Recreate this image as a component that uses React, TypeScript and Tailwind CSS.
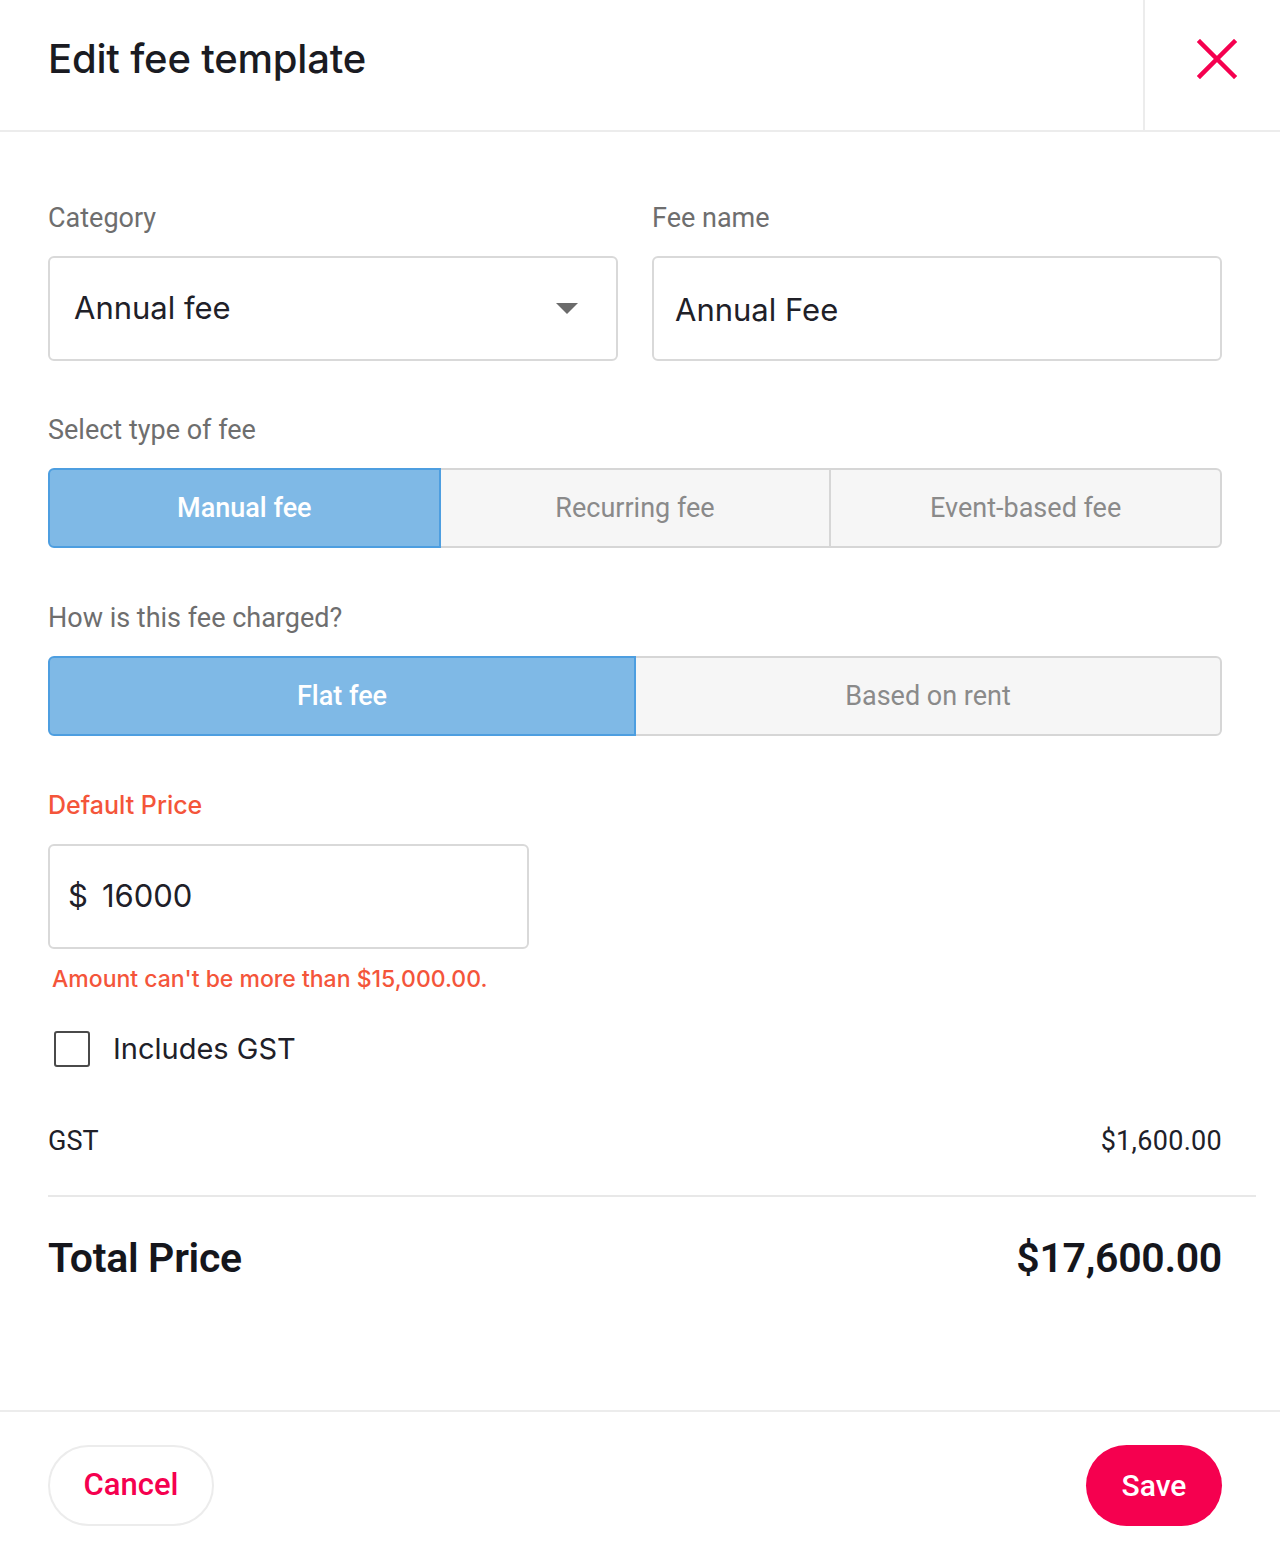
import React from 'react';

const PINK = '#f5004f';

const Label: React.FC<{ children: React.ReactNode; error?: boolean }> = ({ children, error }) => (
  <div
    className={`h-8 leading-8 ${error ? 'text-[#f4553a] font-["Inter",sans-serif] font-medium text-[25px]' : 'text-[#6e6e6e] text-[27px] font-["Roboto",sans-serif]'}`}
  >
    {children}
  </div>
);

interface SegmentedProps {
  options: string[];
  active: number;
}

const Segmented: React.FC<SegmentedProps> = ({ options, active }) => (
  <div className="flex h-20 w-full">
    {options.map((opt, i) => {
      const isActive = i === active;
      const first = i === 0;
      const last = i === options.length - 1;
      return (
        <button
          key={opt}
          className={[
            'flex-1 flex items-center justify-center text-[27px] font-["Roboto",sans-serif] border-2',
            isActive ? 'bg-[#7fb9e6] border-[#4d9ee0] text-white font-medium' : 'bg-[#f6f6f6] border-[#d6d6d6] text-[#8a8a8a]',
            first ? 'rounded-l-md' : '-ml-[2px]',
            last ? 'rounded-r-md' : '',
            isActive ? 'relative z-10' : '',
          ].join(' ')}
        >
          {opt}
        </button>
      );
    })}
  </div>
);

export default function App() {
  return (
    <div className="w-[1280px] h-[1552px] bg-white flex flex-col font-['Inter',sans-serif] text-[#1c1c24]">
      {/* header */}
      <div className="h-[132px] flex border-b-2 border-[#ececec] shrink-0">
        <div className="flex-1 flex items-center pl-12">
          <h1 className="text-[40px] font-medium tracking-[-0.2px] text-[#1a1b22] -mt-3">Edit fee template</h1>
        </div>
        <div className="w-[137px] border-l-2 border-[#ececec] flex items-center justify-center pl-2 -mt-3">
          <svg width="40" height="40" viewBox="0 0 40 40" fill="none">
            <path d="M3 3L37 37M37 3L3 37" stroke={PINK} strokeWidth="4.5" strokeLinecap="square" />
          </svg>
        </div>
      </div>

      {/* body */}
      <div className="flex-1 pl-12 pr-6 pt-[70px]">
        <div className="pr-[34px]">
          <div className="grid grid-cols-2 gap-[34px]">
            <div>
              <Label>Category</Label>
              <div className="mt-[22px] h-[105px] border-2 border-[#d9d9d9] rounded-md flex items-center justify-between pl-[24px] pr-[38px]">
                <span className="text-[31px] text-[#202028]">Annual fee</span>
                <svg width="22" height="12" viewBox="0 0 22 12">
                  <path d="M0 0H22L11 11Z" fill="#6b6b6b" />
                </svg>
              </div>
            </div>
            <div>
              <Label>Fee name</Label>
              <div className="mt-[22px] h-[105px] border-2 border-[#d9d9d9] rounded-md flex items-center pl-[21px]">
                <span className="text-[31px] text-[#202028] mt-1">Annual Fee</span>
              </div>
            </div>
          </div>

          <div className="mt-[53px]">
            <Label>Select type of fee</Label>
            <div className="mt-[22px]">
              <Segmented options={['Manual fee', 'Recurring fee', 'Event-based fee']} active={0} />
            </div>
          </div>

          <div className="mt-[54px]">
            <Label>How is this fee charged?</Label>
            <div className="mt-[22px]">
              <Segmented options={['Flat fee', 'Based on rent']} active={0} />
            </div>
          </div>

          <div className="mt-[53px]">
            <Label error>Default Price</Label>
            <div className="mt-[23px] w-[481px] h-[105px] border-2 border-[#d9d9d9] rounded-md flex items-center pl-[18px] gap-[14px]">
              <span className="text-[31px] text-[#202028]">$</span>
              <span className="text-[31px] text-[#202028]">16000</span>
            </div>
            <div className="mt-4 pl-1 h-7 leading-7 text-[23px] font-medium text-[#f4553a]">
              Amount can't be more than $15,000.00.
            </div>
          </div>

          <div className="mt-[38px] flex items-center pl-[6px] h-9">
            <div className="w-9 h-9 border-2 border-[#4a4a4a] rounded-[3px]" />
            <span className="ml-[23px] text-[29px] text-[#202028]">Includes GST</span>
          </div>

          <div className="mt-[58px] h-8 flex items-center justify-between font-['Roboto',sans-serif] text-[27px] text-[#202028]">
            <span>GST</span>
            <span className="tracking-[0.3px]">$1,600.00</span>
          </div>
        </div>

        <div className="mt-[38px] border-t-2 border-[#e8e8e8]" />

        <div className="pr-[34px] mt-[38px] h-12 flex items-center justify-between font-['Roboto',sans-serif] text-[41px] font-semibold text-[#15161c] tracking-[-0.3px]">
          <span>Total Price</span>
          <span>$17,600.00</span>
        </div>
      </div>

      {/* footer */}
      <div className="h-[142px] shrink-0 border-t-2 border-[#ececec] flex items-start justify-between pl-12 pr-[58px] pt-[33px]">
        <button className="h-[81px] w-[166px] rounded-full border-2 border-[#ececec] text-[31px] font-['Roboto',sans-serif] font-medium" style={{ color: PINK }}>
          Cancel
        </button>
        <button className="h-[81px] w-[136px] rounded-full text-[30px] font-['Roboto',sans-serif] font-medium text-white bg-[#f5004f]">
          Save
        </button>
      </div>
    </div>
  );
}
